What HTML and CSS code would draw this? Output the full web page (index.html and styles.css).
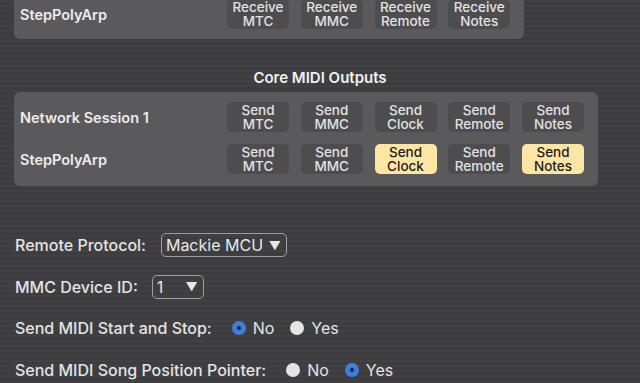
FILE: index.html
```html
<!DOCTYPE html>
<html>

<head>
    <meta charset="utf-8">
    <title>MIDI Settings</title>
    <link rel="stylesheet" href="styles.css">
</head>

<body>
    <div class="panel inputs">
        <div class="row">
            <div class="name">StepPolyArp</div>
            <div class="btn">Receive<br>MTC</div>
            <div class="btn">Receive<br>MMC</div>
            <div class="btn">Receive<br>Remote</div>
            <div class="btn">Receive<br>Notes</div>
        </div>
    </div>

    <h2 class="heading">Core MIDI Outputs</h2>

    <div class="panel outputs">
        <div class="row">
            <div class="name">Network Session 1</div>
            <div class="btn">Send<br>MTC</div>
            <div class="btn">Send<br>MMC</div>
            <div class="btn">Send<br>Clock</div>
            <div class="btn">Send<br>Remote</div>
            <div class="btn">Send<br>Notes</div>
        </div>
        <div class="row">
            <div class="name">StepPolyArp</div>
            <div class="btn">Send<br>MTC</div>
            <div class="btn">Send<br>MMC</div>
            <div class="btn on">Send<br>Clock</div>
            <div class="btn">Send<br>Remote</div>
            <div class="btn on">Send<br>Notes</div>
        </div>
    </div>

    <div class="settings">
        <div class="setting">
            <span class="label">Remote Protocol:</span>
            <span class="picker wide">Mackie MCU <span class="arrow">&#9660;</span></span>
        </div>
        <div class="setting">
            <span class="label">MMC Device ID:</span>
            <span class="picker narrow">1 <span class="arrow">&#9660;</span></span>
        </div>
        <div class="setting">
            <span class="label">Send MIDI Start and Stop:</span>
            <span class="choice first"><span class="radio sel"></span>No</span>
            <span class="choice"><span class="radio"></span>Yes</span>
        </div>
        <div class="setting">
            <span class="label">Send MIDI Song Position Pointer:</span>
            <span class="choice first"><span class="radio"></span>No</span>
            <span class="choice"><span class="radio sel"></span>Yes</span>
        </div>
    </div>
</body>

</html>
```

FILE: styles.css
```css
html, body {
    margin: 0;
    height: 100%;
}

body {
    background-color: #3e3e41;
    background-image: repeating-linear-gradient(180deg, rgba(255,255,255,0.015) 0px, rgba(255,255,255,0.015) 2px, rgba(0,0,0,0.02) 2px, rgba(0,0,0,0.02) 5px);
    font-family: Inter, "Liberation Sans", sans-serif;
    font-weight: 500;
    color: #e8e8e8;
    overflow: hidden;
}

.panel {
    background-color: #5a5a5c;
    border-radius: 6px;
    margin-left: 14px;
    padding: 10px 14px 10px 6px;
    display: flex;
    flex-direction: column;
    gap: 12px;
}

.inputs {
    width: 490px;
    margin-top: -11px;
}

.outputs {
    width: 565px;
    padding-right: 13px;
    padding-bottom: 12px;
}

.row {
    display: grid;
    grid-template-columns: 195.25px repeat(5, 62px);
    column-gap: 11.75px;
    align-items: center;
}

.name {
    font-size: 14.5px;
    font-weight: 600;
    color: #ececec;
}

.btn {
    height: 30px;
    background-color: #4d4d4f;
    border-radius: 5px;
    font-size: 13.5px;
    line-height: 14px;
    text-align: center;
    color: #e2e2e2;
    display: flex;
    align-items: center;
    justify-content: center;
}

.btn.on {
    background-color: #fde5a4;
    color: #1c1c1c;
}

.heading {
    margin: 30px 0 5px;
    text-align: center;
    font-size: 15px;
    font-weight: 600;
    line-height: 18px;
    color: #f0f0f0;
}

.settings {
    margin-top: 46px;
    padding-left: 15px;
    display: flex;
    flex-direction: column;
    gap: 15.5px;
}

.setting {
    height: 26px;
    display: flex;
    align-items: center;
    font-size: 16px;
}

.label {
    margin-right: 14px;
    color: #e4e4e4;
}

.picker {
    height: 24px;
    box-sizing: border-box;
    border: 1.5px solid #a0a0a2;
    border-radius: 5px;
    display: flex;
    align-items: center;
    justify-content: space-between;
    padding: 0 5px 0 4px;
    font-weight: 400;
    font-size: 16px;
    color: #e8e8e8;
}

.wide {
    width: 126px;
    margin-left: 1px;
}

.narrow {
    width: 52px;
}

.arrow {
    font-size: 12px;
}

.choice {
    display: flex;
    align-items: center;
    margin-right: 16px;
    font-weight: 400;
    color: #e4e4e4;
}

.choice.first {
    margin-left: 6px;
}

.radio {
    width: 14px;
    height: 14px;
    border-radius: 50%;
    background-color: #e4e4e4;
    margin-right: 7px;
    box-sizing: border-box;
}

.radio.sel {
    background: radial-gradient(circle, #1e2c44 0 1.8px, #3d80da 2.3px);
}
```
